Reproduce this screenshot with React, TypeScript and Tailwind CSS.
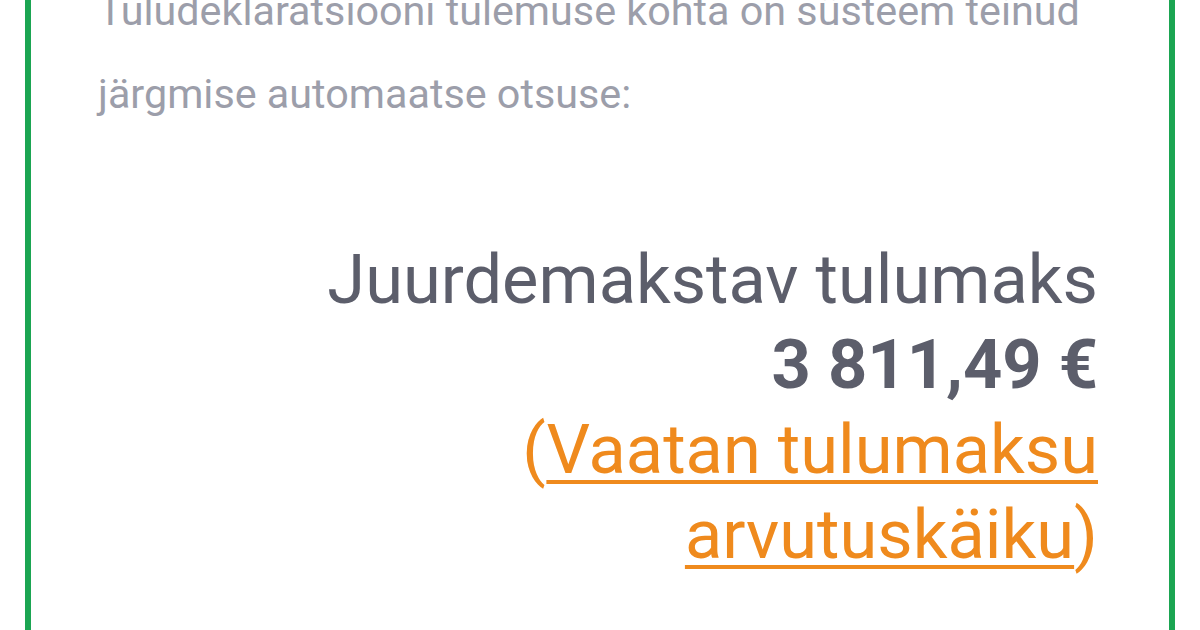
import React from 'react';

const FONT = { fontFamily: 'Roboto, "Noto Sans", sans-serif' };

export default function App() {
  return (
    <div className="w-[1200px] h-[630px] overflow-hidden bg-white" style={FONT}>
      <div className="mx-[25px] -mt-[30px] h-[700px] border-x-[6px] border-[#1ba552] pl-[67px] pr-[71px]">
        <p className="text-[41.3px] leading-[83px] text-[#9c9eaa]">
          Tuludeklaratsiooni tulemuse kohta on süsteem teinud järgmise automaatse otsuse:
        </p>

        <div className="ml-auto mt-[101px] w-[790px] text-right text-[68.6px] leading-[85px] text-[#5c5e6b]">
          <div>Juurdemakstav tulumaks</div>
          <div className="font-bold">3 811,49 €</div>
          <div className="text-[#ef8a1d]">
            (
            <a
              href="#"
              className="underline decoration-[4px] underline-offset-[7px]"
            >
              Vaatan tulumaksu arvutuskäiku
            </a>
            )
          </div>
        </div>
      </div>
    </div>
  );
}
